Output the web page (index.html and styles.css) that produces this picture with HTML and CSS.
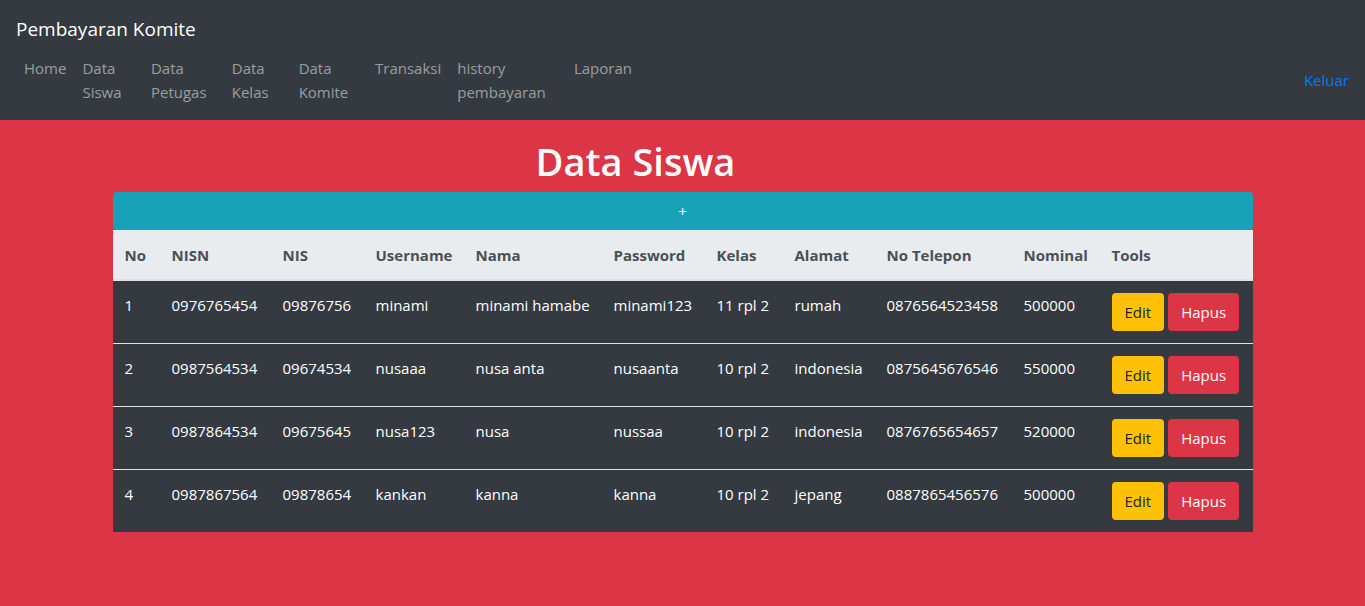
FILE: index.html
```html
<!DOCTYPE html>
<html lang="id">
<head>
<meta charset="utf-8">
<title>Data Siswa</title>
<link rel="stylesheet" href="styles.css">
</head>
<body>
<nav class="navbar">
  <div class="navbar-main">
    <a class="brand" href="#">Pembayaran Komite</a>
    <ul class="nav">
      <li><a href="#">Home</a></li>
      <li><a href="#">Data Siswa</a></li>
      <li><a href="#">Data Petugas</a></li>
      <li><a href="#">Data Kelas</a></li>
      <li><a href="#">Data Komite</a></li>
      <li><a href="#">Transaksi</a></li>
      <li><a href="#">history pembayaran</a></li>
      <li><a href="#">Laporan</a></li>
    </ul>
  </div>
  <a class="logout" href="#">Keluar</a>
</nav>
<main class="container">
  <h1 class="title">Data Siswa</h1>
  <button class="add" type="button">+</button>
  <table class="table">
    <colgroup>
      <col class="c-no"><col class="c-nisn"><col class="c-nis"><col class="c-user"><col class="c-nama"><col class="c-pass"><col class="c-kelas"><col class="c-alamat"><col class="c-telp"><col class="c-nominal"><col class="c-tools">
    </colgroup>
    <thead>
      <tr><th>No</th><th>NISN</th><th>NIS</th><th>Username</th><th>Nama</th><th>Password</th><th>Kelas</th><th>Alamat</th><th>No Telepon</th><th>Nominal</th><th>Tools</th></tr>
    </thead>
    <tbody>
      <tr><td>1</td><td>0976765454</td><td>09876756</td><td>minami</td><td>minami hamabe</td><td>minami123</td><td>11 rpl 2</td><td>rumah</td><td>0876564523458</td><td>500000</td><td><div class="tools"><button class="btn edit" type="button">Edit</button><button class="btn delete" type="button">Hapus</button></div></td></tr>
      <tr><td>2</td><td>0987564534</td><td>09674534</td><td>nusaaa</td><td>nusa anta</td><td>nusaanta</td><td>10 rpl 2</td><td>indonesia</td><td>0875645676546</td><td>550000</td><td><div class="tools"><button class="btn edit" type="button">Edit</button><button class="btn delete" type="button">Hapus</button></div></td></tr>
      <tr><td>3</td><td>0987864534</td><td>09675645</td><td>nusa123</td><td>nusa</td><td>nussaa</td><td>10 rpl 2</td><td>indonesia</td><td>0876765654657</td><td>520000</td><td><div class="tools"><button class="btn edit" type="button">Edit</button><button class="btn delete" type="button">Hapus</button></div></td></tr>
      <tr><td>4</td><td>0987867564</td><td>09878654</td><td>kankan</td><td>kanna</td><td>kanna</td><td>10 rpl 2</td><td>jepang</td><td>0887865456576</td><td>500000</td><td><div class="tools"><button class="btn edit" type="button">Edit</button><button class="btn delete" type="button">Hapus</button></div></td></tr>
    </tbody>
  </table>
</main>
</body>
</html>
```
FILE: styles.css
```css
*, *::before, *::after { box-sizing: border-box; }
body {
  margin: 0;
  background: #dc3545;
  color: #fff;
  font: 15px/24px "Open Sans", "Noto Sans", sans-serif;
}
a { text-decoration: none; }
.navbar {
  display: flex;
  align-items: center;
  justify-content: space-between;
  padding: 8px 16px;
  background: #343a40;
}
.brand {
  display: block;
  padding: 6px 0 4px;
  color: #fff;
  font-size: 19px;
  line-height: 30px;
}
.nav {
  display: flex;
  max-width: 624px;
  margin: 0;
  padding: 0;
  list-style: none;
}
.nav a {
  display: block;
  padding: 8px;
  color: rgba(255, 255, 255, .5);
}
.logout { padding-top: 40px; color: #007bff; }
.container { max-width: 1140px; margin: 0 auto; }
.title {
  margin: 0;
  padding: 17px 94px 7px 0;
  text-align: center;
  font-size: 38px;
  font-weight: 600;
  line-height: 48px;
}
.add {
  display: block;
  width: 100%;
  padding: 7px 12px;
  border: 0;
  border-radius: 4px;
  background: #17a2b8;
  color: #fff;
  font: inherit;
}
.table {
  width: 100%;
  table-layout: fixed;
  border-collapse: separate;
  border-spacing: 0;
  background: #343a40;
}
.table th, .table td {
  padding: 12px;
  text-align: left;
  vertical-align: top;
  white-space: nowrap;
}
.table tr + tr td { border-top: 1px solid #dee2e6; }
.table th {
  border-top: 1px solid #e9ecef;
  border-bottom: 2px solid #dee2e6;
  background: #e9ecef;
  color: #495057;
  font-weight: 700;
}
.c-no { width: 47px; }
.c-nisn { width: 111px; }
.c-nis { width: 93px; }
.c-user { width: 100px; }
.c-nama { width: 138px; }
.c-pass { width: 103px; }
.c-kelas { width: 78px; }
.c-alamat { width: 92px; }
.c-telp { width: 137px; }
.c-nominal { width: 88px; }
.tools { display: flex; gap: 4px; }
.btn {
  padding: 6px 12px;
  border: 1px solid transparent;
  border-radius: 4px;
  font: inherit;
}
.edit { background: #ffc107; color: #212529; }
.delete { background: #dc3545; color: #fff; }
```
